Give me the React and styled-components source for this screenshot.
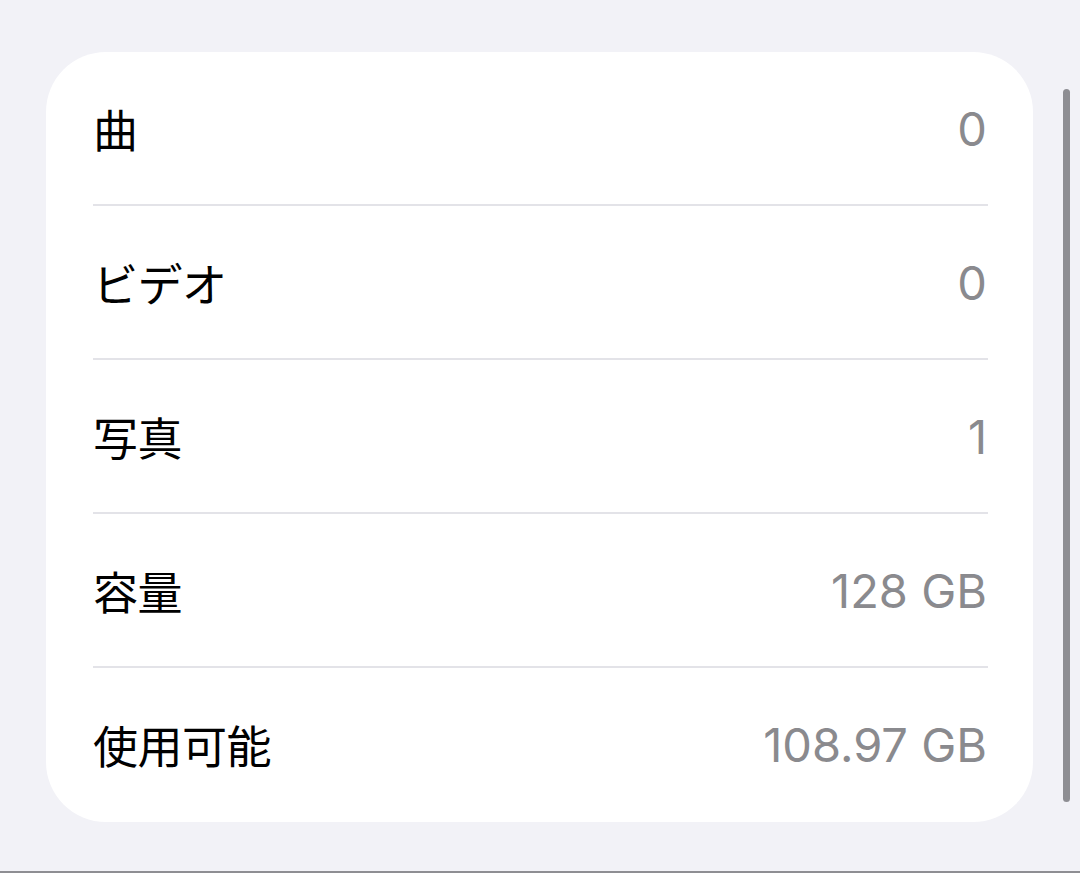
import React from "react";
import styled, { createGlobalStyle } from "styled-components";

const Global = createGlobalStyle`
  html, body { margin: 0; padding: 0; background: #f2f2f7; }
  body { font-family: Inter, "Noto Sans CJK JP", sans-serif; }
`;

const Page = styled.div`
  position: relative;
  width: 1080px;
  height: 873px;
  box-sizing: border-box;
  padding: 52px 47px 0 46px;
  background: #f2f2f7;
  overflow: hidden;
`;

const Card = styled.div`
  background: #ffffff;
  border-radius: 60px;
  padding: 0 45px 2px 47px;
  display: flex;
  flex-direction: column;
`;

const Row = styled.div`
  height: 152px;
  display: flex;
  align-items: center;
  justify-content: space-between;
  border-top: ${(p) => (p.$first ? "none" : "2px solid #e3e3e8")};
`;

const Label = styled.span`
  font-family: "Noto Sans CJK JP", sans-serif;
  font-size: 45px;
  color: #000000;
  letter-spacing: -0.5px;
`;

const Value = styled.span`
  font-family: Inter, "Noto Sans CJK JP", sans-serif;
  font-size: 47px;
  color: #8a8a8e;
  margin-right: 1px;
`;

const Scrollbar = styled.div`
  position: absolute;
  left: 1063px;
  top: 89px;
  width: 7px;
  height: 713px;
  border-radius: 4px;
  background: #8e8e93;
`;

const BottomLine = styled.div`
  position: absolute;
  left: 0;
  right: 0;
  bottom: 0;
  height: 2px;
  background: #8e8e93;
`;

const rows = [
  ["曲", "0"],
  ["ビデオ", "0"],
  ["写真", "1"],
  ["容量", "128 GB"],
  ["使用可能", "108.97 GB"],
];

export default function App() {
  return (
    <>
      <Global />
      <Page>
        <Card>
          {rows.map(([l, v], i) => (
            <Row key={l} $first={i === 0}>
              <Label>{l}</Label>
              <Value>{v}</Value>
            </Row>
          ))}
        </Card>
        <Scrollbar />
        <BottomLine />
      </Page>
    </>
  );
}
